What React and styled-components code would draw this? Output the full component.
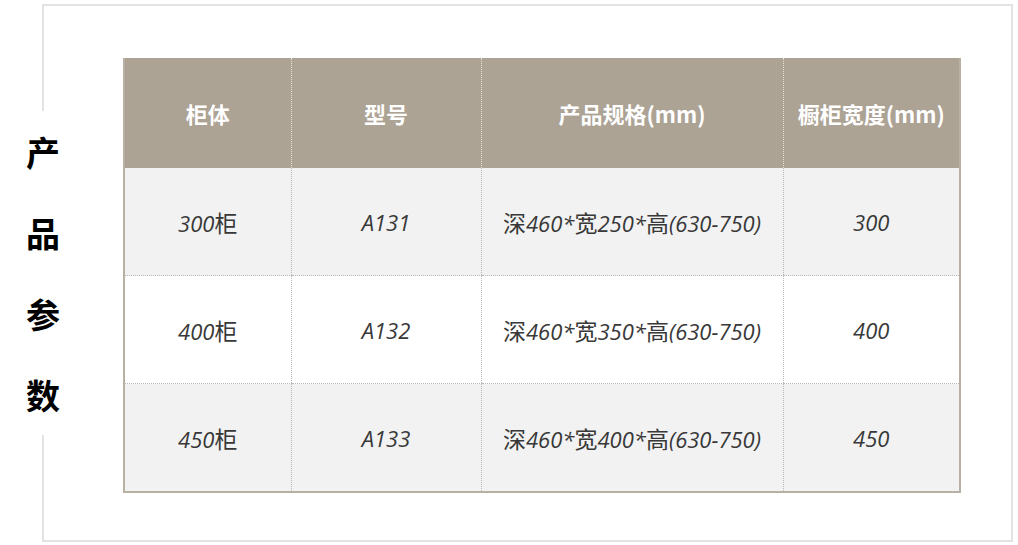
import React from "react";
import styled, { createGlobalStyle } from "styled-components";

const GlobalStyle = createGlobalStyle`
  html, body {
    margin: 0;
    padding: 0;
    background: #ffffff;
  }
  body {
    font-family: "Open Sans", "Noto Sans CJK SC", sans-serif;
  }
`;

const columns = ["柜体", "型号", "产品规格(mm)", "橱柜宽度(mm)"];
const widths = [167, 190, 302, 177];

const rows = [
  ["300柜", "A131", "深460*宽250*高(630-750)", "300"],
  ["400柜", "A132", "深460*宽350*高(630-750)", "400"],
  ["450柜", "A133", "深460*宽400*高(630-750)", "450"],
];

// CJK glyphs stay upright, the rest is italic
function Mixed({ text }) {
  const parts = text.split(/([\u4e00-\u9fff]+)/).filter(Boolean);
  return parts.map((p, i) =>
    /[\u4e00-\u9fff]/.test(p) ? <Han key={i}>{p}</Han> : <span key={i}>{p}</span>
  );
}

function App() {
  return (
    <Page>
      <GlobalStyle />
      <Frame>
        <Label>
          <span>产</span>
          <span>品</span>
          <span>参</span>
          <span>数</span>
        </Label>
        <Table>
          <colgroup>
            {widths.map((w, i) => (
              <col key={i} style={{ width: w }} />
            ))}
          </colgroup>
          <thead>
            <tr>
              {columns.map((c, i) => (
                <HeadCell key={i} $first={i === 0}>
                  {c}
                </HeadCell>
              ))}
            </tr>
          </thead>
          <tbody>
            {rows.map((row, r) => (
              <Row key={r} $shaded={r % 2 === 0}>
                {row.map((cell, i) => (
                  <Cell key={i} $first={i === 0} $last={r === rows.length - 1}>
                    <Mixed text={cell} />
                  </Cell>
                ))}
              </Row>
            ))}
          </tbody>
        </Table>
      </Frame>
    </Page>
  );
}

export default App;

const Page = styled.div`
  padding: 4px 0 0 42px;
  width: 1018px;
  height: 545px;
  box-sizing: border-box;
`;

const Frame = styled.div`
  width: 971px;
  height: 538px;
  box-sizing: border-box;
  border: 2px solid #e3e3e3;
  display: flex;
  align-items: center;
  padding: 5px 0 0 0;
`;

const Label = styled.div`
  margin: 0 0 6px -20px;
  width: 38px;
  background: #ffffff;
  display: flex;
  flex-direction: column;
  align-items: center;
  font-family: "Noto Sans CJK SC", sans-serif;
  font-weight: 700;
  font-size: 34px;
  line-height: 81px;
  color: #000000;
  flex-shrink: 0;
`;

const Table = styled.table`
  margin-left: 61px;
  width: 836px;
  border-collapse: collapse;
  table-layout: fixed;
  border-left: 2px solid #b8b0a4;
  border-right: 2px solid #b8b0a4;
  border-bottom: 2px solid #b8b0a4;
`;

const HeadCell = styled.th`
  height: 110px;
  padding: 0;
  background: #aca395;
  color: #ffffff;
  font-family: "Noto Sans CJK SC", sans-serif;
  font-weight: 700;
  font-size: 22px;
  text-align: center;
  border-left: ${(p) => (p.$first ? "none" : "1px dotted #e6e1d8")};
`;

const Row = styled.tr`
  background: ${(p) => (p.$shaded ? "#f2f2f2" : "#ffffff")};
`;

const Cell = styled.td`
  height: 107px;
  padding: 0;
  text-align: center;
  font-family: "Open Sans", "Noto Sans CJK SC", sans-serif;
  font-style: italic;
  font-size: 22px;
  color: #383838;
  border-left: ${(p) => (p.$first ? "none" : "1px dotted #b8b8b8")};
  border-bottom: ${(p) => (p.$last ? "none" : "1px dotted #b8b8b8")};
`;

const Han = styled.span`
  font-family: "Noto Sans CJK SC", sans-serif;
  font-style: normal;
  font-size: 23px;
`;
